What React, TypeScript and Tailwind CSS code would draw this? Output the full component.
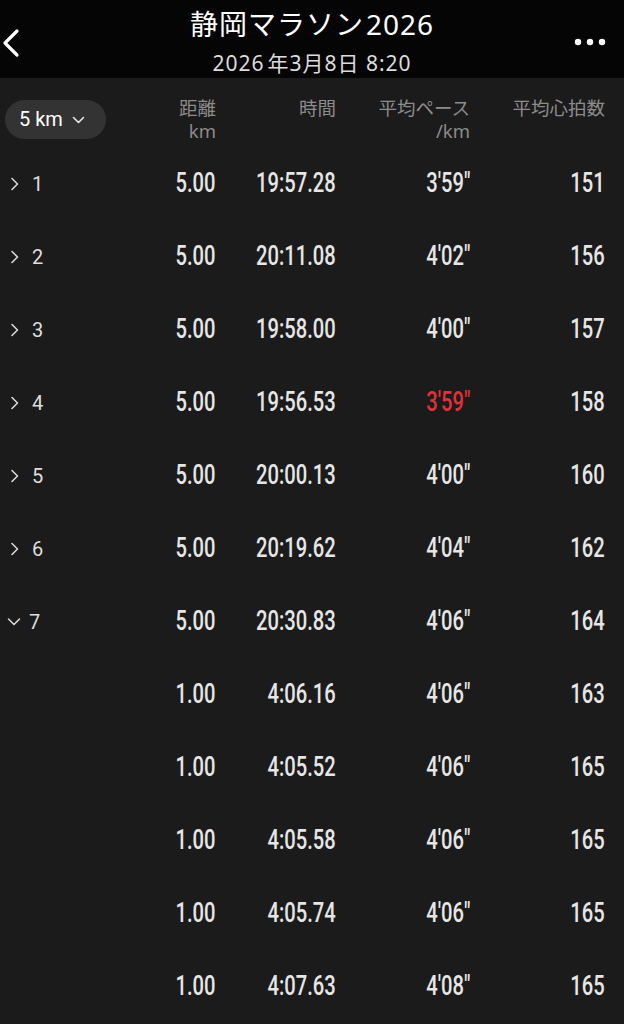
import React from "react";

type Row = { lap?: string; open?: boolean; dist: string; time: string; pace: string; hr: string; red?: boolean };

const rows: Row[] = [
  { lap: "1", dist: "5.00", time: "19:57.28", pace: "3'59\"", hr: "151" },
  { lap: "2", dist: "5.00", time: "20:11.08", pace: "4'02\"", hr: "156" },
  { lap: "3", dist: "5.00", time: "19:58.00", pace: "4'00\"", hr: "157" },
  { lap: "4", dist: "5.00", time: "19:56.53", pace: "3'59\"", hr: "158", red: true },
  { lap: "5", dist: "5.00", time: "20:00.13", pace: "4'00\"", hr: "160" },
  { lap: "6", dist: "5.00", time: "20:19.62", pace: "4'04\"", hr: "162" },
  { lap: "7", open: true, dist: "5.00", time: "20:30.83", pace: "4'06\"", hr: "164" },
  { dist: "1.00", time: "4:06.16", pace: "4'06\"", hr: "163" },
  { dist: "1.00", time: "4:05.52", pace: "4'06\"", hr: "165" },
  { dist: "1.00", time: "4:05.58", pace: "4'06\"", hr: "165" },
  { dist: "1.00", time: "4:05.74", pace: "4'06\"", hr: "165" },
  { dist: "1.00", time: "4:07.63", pace: "4'08\"", hr: "165" },
];

const cjk = "font-['Noto_Sans','Noto_Sans_CJK_JP',sans-serif]";

function Num({ v, red }: { v: string; red?: boolean }) {
  return (
    <span
      className={`inline-block origin-right scale-x-[0.72] font-['Roboto',sans-serif] font-medium text-[28px] leading-none ${
        red ? "text-[#e0323a]" : "text-[#e6e6e6]"
      }`}
    >
      {v}
    </span>
  );
}

export default function App() {
  return (
    <div className={`w-[624px] h-[1024px] overflow-hidden bg-[#1b1b1b] ${cjk}`}>
      {/* Header */}
      <div className="relative h-[78px] bg-[#050505] flex flex-col items-center">
        <div className="mt-[5px] text-[28px] leading-[38px] tracking-[1px] text-white">
          静岡マラソン<span className="ml-[2px]">2026</span>
        </div>
        <div className="mt-[7px] text-[21px] leading-[26px] tracking-[1px] text-[#dcdcdc]">
          2026<span className="ml-[3px]">年</span>3月8日 8:20
        </div>
        <svg className="absolute left-[1px] top-[28px]" width="20" height="30" viewBox="0 0 20 30">
          <path d="M16 3 L4 15 L16 27" fill="none" stroke="white" strokeWidth="3.2" strokeLinecap="round" strokeLinejoin="round" />
        </svg>
        <svg className="absolute left-[574px] top-[37px]" width="32" height="10" viewBox="0 0 32 10">
          <circle cx="4" cy="5" r="3.2" fill="white" />
          <circle cx="16" cy="5" r="3.2" fill="white" />
          <circle cx="28" cy="5" r="3.2" fill="white" />
        </svg>
      </div>

      {/* Column headers */}
      <div className="h-[69px] flex items-start text-[18.5px] leading-[23px] text-[#8c8c8c]">
        <div className="w-[150px] pl-[5px] pt-[22px]">
          <div className="w-[101px] h-[39px] rounded-full bg-[#333333] flex items-center pl-[14px] gap-[9px]">
            <span className="font-['Roboto',sans-serif] text-[20px] text-white">5 km</span>
            <svg width="13" height="8" viewBox="0 0 13 8">
              <path d="M1.5 1.5 L6.5 6.5 L11.5 1.5" fill="none" stroke="#e6e6e6" strokeWidth="1.6" strokeLinecap="round" strokeLinejoin="round" />
            </svg>
          </div>
        </div>
        <div className="w-[66px] pt-[18px] text-right">
          <div>距離</div>
          <div>km</div>
        </div>
        <div className="w-[120px] pt-[18px] text-right">時間</div>
        <div className="w-[134px] pt-[18px] text-right">
          <div>平均ペース</div>
          <div>/km</div>
        </div>
        <div className="w-[135px] pt-[18px] text-right">平均心拍数</div>
      </div>

      {/* Rows */}
      {rows.map((r, i) => (
        <div key={i} className="h-[73px] flex items-center">
          <div className="w-[150px] flex items-center">
            {r.lap && (
              <>
                {r.open ? (
                  <svg className="ml-[7px]" width="14" height="10" viewBox="0 0 14 10">
                    <path d="M1.5 2 L7 7.5 L12.5 2" fill="none" stroke="#d8d8d8" strokeWidth="1.6" strokeLinecap="round" strokeLinejoin="round" />
                  </svg>
                ) : (
                  <svg className="ml-[10px] mr-[4px]" width="10" height="14" viewBox="0 0 10 14">
                    <path d="M2 1.5 L7.5 7 L2 12.5" fill="none" stroke="#d8d8d8" strokeWidth="1.6" strokeLinecap="round" strokeLinejoin="round" />
                  </svg>
                )}
                <span className="ml-[8px] font-['Roboto',sans-serif] text-[20px] text-[#dedede]">{r.lap}</span>
              </>
            )}
          </div>
          <div className="w-[66px] text-right"><Num v={r.dist} /></div>
          <div className="w-[120px] text-right"><Num v={r.time} /></div>
          <div className="w-[134px] text-right"><Num v={r.pace} red={r.red} /></div>
          <div className="w-[135px] text-right"><Num v={r.hr} /></div>
        </div>
      ))}
    </div>
  );
}
